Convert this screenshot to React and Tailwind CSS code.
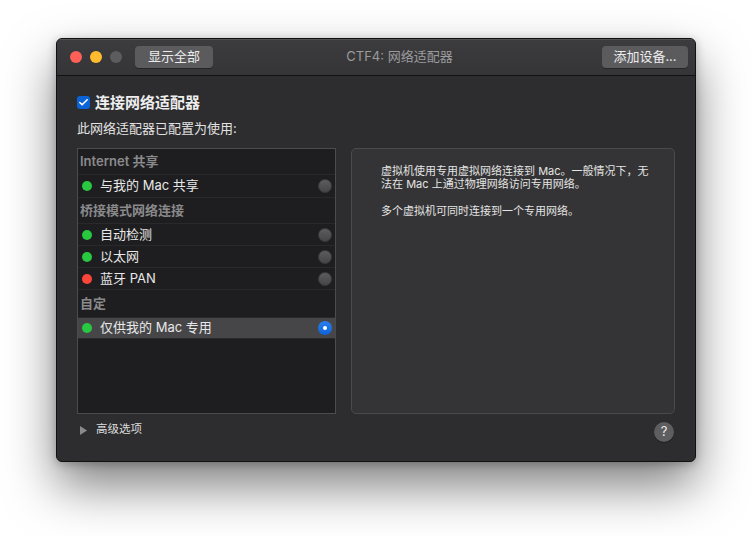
import { Check } from 'lucide-react';

const font = { fontFamily: 'Inter, "Noto Sans CJK SC", sans-serif' };

const rows = [
  { type: 'header', label: 'Internet 共享', h: 'h-[26px]' },
  { type: 'item', label: '与我的 Mac 共享', dot: 'bg-[#28c840]', h: 'h-[23px]' },
  { type: 'header', label: '桥接模式网络连接', h: 'h-[26px]' },
  { type: 'item', label: '自动检测', dot: 'bg-[#28c840]', h: 'h-[22px]' },
  { type: 'item', label: '以太网', dot: 'bg-[#28c840]', h: 'h-[22px]' },
  { type: 'item', label: '蓝牙 PAN', dot: 'bg-[#ff453a]', h: 'h-[22px]' },
  { type: 'header', label: '自定', h: 'h-[28px]' },
  { type: 'item', label: '仅供我的 Mac 专用', dot: 'bg-[#28c840]', h: 'h-[21px]', selected: true },
];

function Radio({ on }) {
  if (on) {
    return (
      <div className="w-[14px] h-[14px] rounded-full bg-gradient-to-b from-[#2a7ff0] to-[#0b63d6] flex items-center justify-center">
        <div className="w-[4px] h-[4px] rounded-full bg-white" />
      </div>
    );
  }
  return <div className="w-[14px] h-[14px] rounded-full bg-gradient-to-b from-[#5c5c5e] to-[#464648] border border-[#3a3a3c]" />;
}

export default function App() {
  return (
    <div className="w-[752px] h-[536px] bg-white pl-[56px] pt-[38px]" style={font}>
      <div className="w-[640px] h-[424px] rounded-[6px] bg-[#2d2d2f] border border-[#111] shadow-[0_24px_50px_rgba(0,0,0,0.5),0_2px_10px_rgba(0,0,0,0.25)] overflow-hidden flex flex-col">
        {/* Title bar */}
        <div className="h-[37px] shrink-0 flex items-center bg-gradient-to-b from-[#3c3c3e] to-[#353537] border-b border-[#111] shadow-[inset_0_1px_0_rgba(255,255,255,0.12)]">
          <div className="flex items-center gap-[8px] pl-[13px]">
            <div className="w-[12px] h-[12px] rounded-full bg-[#fe5f57]" />
            <div className="w-[12px] h-[12px] rounded-full bg-[#febc2e]" />
            <div className="w-[12px] h-[12px] rounded-full bg-[#5c5c5e]" />
          </div>
          <button className="ml-[13px] w-[78px] h-[22px] rounded-[4px] bg-[#5b5b5e] text-[13px] text-[#ececec] flex items-center justify-center shadow-[0_1px_0_rgba(0,0,0,0.3)]">
            显示全部
          </button>
          <div className="flex-1 text-center text-[13px] text-[#9b9b9d] pr-[16px]">CTF4: 网络适配器</div>
          <button className="mr-[7px] w-[86px] h-[22px] rounded-[4px] bg-[#5b5b5e] text-[13px] text-[#ececec] flex items-center justify-center shadow-[0_1px_0_rgba(0,0,0,0.3)]">
            添加设备...
          </button>
        </div>

        {/* Body */}
        <div className="flex-1 px-[20px] pt-[19px] flex flex-col">
          <div className="flex items-center gap-[5px] h-[15px]">
            <div className="w-[13px] h-[13px] rounded-[3px] bg-[#0a64d8] flex items-center justify-center">
              <Check className="w-[11px] h-[11px] text-white" strokeWidth={3.5} />
            </div>
            <span className="text-[15px] font-bold text-[#eeeeee] leading-none">连接网络适配器</span>
          </div>
          <div className="mt-[12px] text-[13px] text-[#e2e2e2] leading-none">此网络适配器已配置为使用:</div>

          <div className="mt-[13px] flex gap-[15px]">
            {/* List */}
            <div className="w-[260px] h-[266px] bg-[#1e1e20] border border-[#4b4b4d]">
              {rows.map((r, i) =>
                r.type === 'header' ? (
                  <div key={i} className={`${r.h} flex items-center pl-[2px] border-b border-[#29292b] text-[13px] font-semibold text-[#8a8a8c]`}>
                    {r.label}
                  </div>
                ) : (
                  <div
                    key={i}
                    className={`${r.h} flex items-center pl-[4px] pr-[3px] border-b border-[#29292b] ${r.selected ? 'bg-[#464648]' : ''}`}
                  >
                    <div className={`w-[10px] h-[10px] rounded-full ${r.dot}`} />
                    <span className="ml-[8px] flex-1 text-[13px] text-[#e8e8e8]">{r.label}</span>
                    <Radio on={r.selected} />
                  </div>
                )
              )}
            </div>

            {/* Description */}
            <div className="w-[325px] h-[266px] bg-[#343436] border border-[#4a4a4c] rounded-[5px] pl-[29px] pt-[16px]">
              <p className="text-[11px] leading-[13px] text-[#e4e4e4]">
                虚拟机使用专用虚拟网络连接到 Mac。一般情况下，无
                <br />
                法在 Mac 上通过物理网络访问专用网络。
              </p>
              <p className="mt-[14px] text-[11px] leading-[13px] text-[#e4e4e4]">多个虚拟机可同时连接到一个专用网络。</p>
            </div>
          </div>

          {/* Footer */}
          <div className="mt-[5px] flex items-center h-[22px]">
            <svg width="7" height="9" viewBox="0 0 7 9" className="ml-[3px]">
              <path d="M0 0 L7 4.5 L0 9 Z" fill="#8a8a8c" />
            </svg>
            <span className="ml-[9px] text-[11.5px] text-[#dcdcdc]">高级选项</span>
            <div className="ml-auto mr-[1px] mt-[4px] w-[20px] h-[20px] rounded-full bg-[#5e5e60] flex items-center justify-center text-[13px] text-[#e8e8e8] shadow-[0_1px_1px_rgba(0,0,0,0.3)]">
              ?
            </div>
          </div>
        </div>
      </div>
    </div>
  );
}
